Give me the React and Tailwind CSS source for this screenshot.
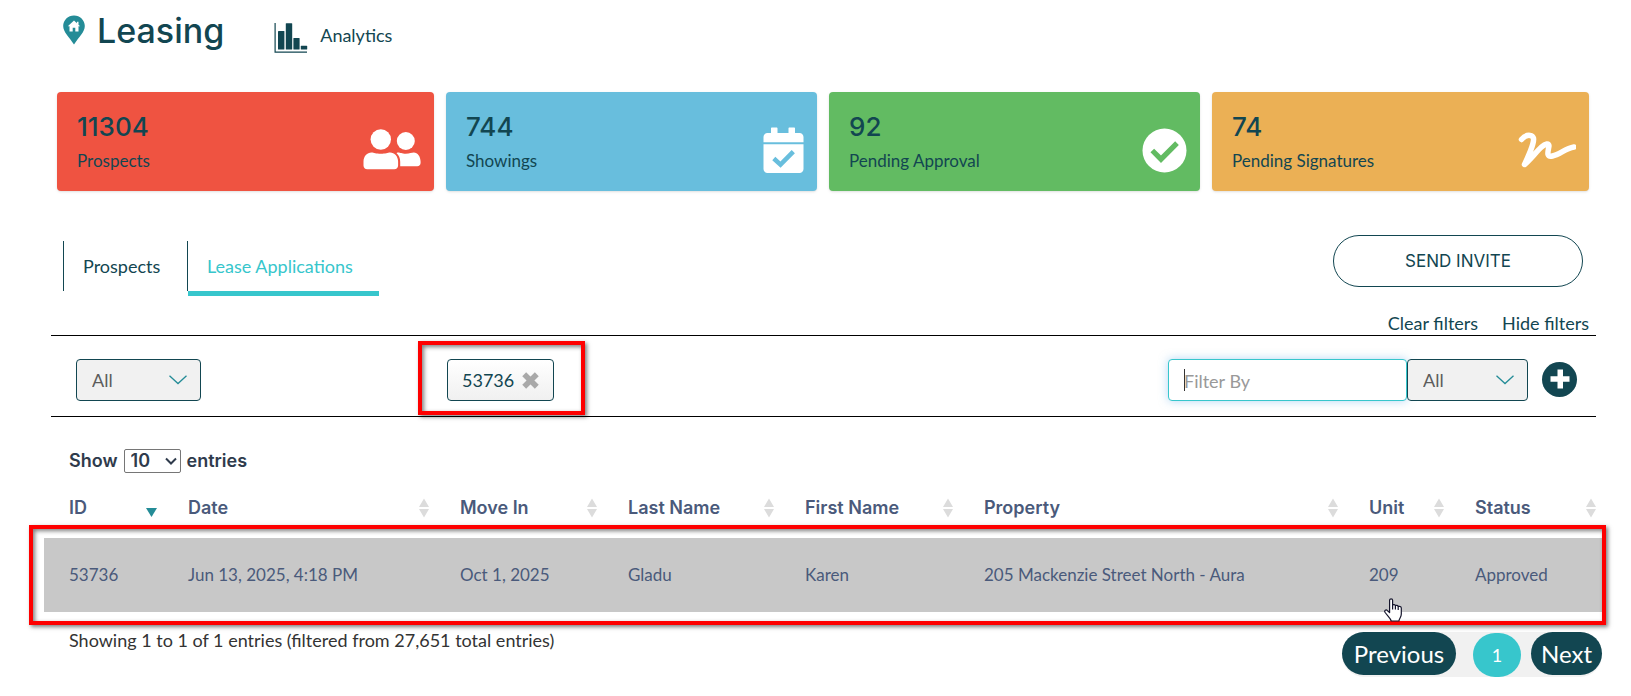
import { useState } from 'react';

const HEADING = "font-['Inter','Liberation_Sans',sans-serif]";

const stats = [
    { value: '11304', label: 'Prospects', color: 'bg-[#ef5341]', wrap: 'pr-1.5', Icon: PeopleIcon },
    { value: '744', label: 'Showings', color: 'bg-[#68bedd]', wrap: 'px-1.5', Icon: CalendarIcon },
    { value: '92', label: 'Pending Approval', color: 'bg-[#62bb62]', wrap: 'px-1.5', Icon: CheckIcon },
    { value: '74', label: 'Pending Signatures', color: 'bg-[#ebb055]', wrap: 'pl-1.5', Icon: SignatureIcon },
];

const columns = [
    { label: 'ID', width: 'w-[119px]', sorted: true },
    { label: 'Date', width: 'w-[272px]' },
    { label: 'Move In', width: 'w-[168px]' },
    { label: 'Last Name', width: 'w-[177px]' },
    { label: 'First Name', width: 'w-[179px]' },
    { label: 'Property', width: 'w-auto' },
    { label: 'Unit', width: 'w-[106px]' },
    { label: 'Status', width: 'w-[152px]' },
];

const rows = [
    ['53736', 'Jun 13, 2025, 4:18 PM', 'Oct 1, 2025', 'Gladu', 'Karen', '205 Mackenzie Street North - Aura', '209', 'Approved'],
];

function PinIcon() {
    return (
        <svg width="22" height="30" viewBox="0 0 22 30" aria-hidden="true">
            <path d="M11 0.500C5 0.500 0.200 5.200 0.200 11c0 6 5.600 10.500 10.800 18.500C16.200 21.500 21.800 17 21.800 11 21.800 5.200 17 0.500 11 0.500z" fill="#248c97" />
            <path d="M11 5.500L4.800 11.300h1.700v5.200h3.200v-3.800h2.600v3.800h3.200v-5.200h1.700l-1.700-1.600V6.800h-1.600v1.400z" fill="#fff" />
        </svg>
    );
}

function ChartIcon() {
    return (
        <svg width="34" height="32" viewBox="0 0 34 32" fill="#124651" aria-hidden="true">
            <path d="M0.500 1h1.200v28.500H33v1.200H0.500z" />
            <rect x="4" y="9" width="6.400" height="18.500" rx="0.600" />
            <rect x="11.800" y="1.200" width="6.400" height="26.300" rx="0.600" />
            <rect x="19.400" y="16" width="6.200" height="11.500" rx="0.600" />
            <rect x="26.800" y="23.800" width="6.400" height="3.700" rx="0.600" />
        </svg>
    );
}

function PeopleIcon() {
    return (
        <svg width="58" height="42" viewBox="0 0 58 42" fill="#fff" aria-hidden="true">
            <circle cx="17.800" cy="10.500" r="10.200" />
            <circle cx="42.800" cy="12" r="9" />
            <path d="M8.500 23.500c2.500 0 4.500 1.300 9.300 1.300s6.800-1.300 9.300-1.300c4.400 0 8 3.800 8 9v4c0 2.400-1.600 3.800-3.800 3.800H4.300c-2.200 0-3.800-1.400-3.800-3.800v-4c0-5.200 3.600-9 8-9z" />
            <path d="M35 23.500c2.500 0 3.700 1.200 7.800 1.200s5.600-1.200 8-1.200c3.800 0 6.800 4.200 6.800 9.300v1c0 2.300-1.400 3.500-3.400 3.500H37.200v-4.500c0-3.600-1.200-6.200-3.600-8.600 0-0.400 0.800-0.700 1.400-0.700z" />
        </svg>
    );
}

function CalendarIcon() {
    return (
        <svg width="41" height="46" viewBox="0 0 41 46" fill="#fff" aria-hidden="true">
            <path d="M9 0.500h4.500c0.700 0 1 0.300 1 1V6h11V1.500c0-0.700 0.300-1 1-1H31c0.700 0 1 0.300 1 1V6h4.500c2.300 0 4 1.700 4 4v5.200H0.500V10c0-2.300 1.700-4 4-4H8V1.500c0-0.700 0.300-1 1-1z" />
            <path d="M0.500 17.200h40V42c0 2.300-1.700 4-4 4h-32c-2.300 0-4-1.700-4-4z" />
            <path d="M10.800 31.500l6.700 6.200 12.800-13" fill="none" stroke="#68bedd" strokeWidth="4.500" />
        </svg>
    );
}

function CheckIcon() {
    return (
        <svg width="45" height="45" viewBox="0 0 45 45" aria-hidden="true">
            <circle cx="22.500" cy="22.500" r="22" fill="#fff" />
            <path d="M10.300 22.500l8.700 8.700 16-16" fill="none" stroke="#62bb62" strokeWidth="5.200" />
        </svg>
    );
}

function SignatureIcon() {
    return (
        <svg width="58" height="36" viewBox="0 0 58 36" fill="none" stroke="#fff" strokeWidth="5.500" strokeLinecap="round" strokeLinejoin="round" aria-hidden="true">
            <path d="M3.500 7.500C6 4.500 9 3 12 3.400c4 0.600 4.200 3.600 2.800 8.600C13.300 18 10 25 6.500 32.500 12 28 18 20 23.500 15c3.500-3.200 8-4.600 7.400-0.600-0.700 5-3.200 11 3.600 9.600C42 22.500 47 16.500 56 15" />
        </svg>
    );
}

function Chevron() {
    return (
        <svg className="pointer-events-none absolute right-3.5 top-4" width="18" height="10" viewBox="0 0 18 10" fill="none" stroke="#248c97" strokeWidth="1.300" aria-hidden="true">
            <path d="M0.500 0.700L9 8.500l8.500-7.800" />
        </svg>
    );
}

function SortIcon({ sorted }) {
    if (sorted) {
        return (
            <svg width="11" height="20" viewBox="0 0 11 20" aria-hidden="true">
                <path d="M0 10h11L5.500 19z" fill="#248c97" />
            </svg>
        );
    }
    return (
        <svg width="10" height="20" viewBox="0 0 10 20" fill="#dcdcdc" aria-hidden="true">
            <path d="M5 0.500L10 9H0zM0 11h10l-5 8.500z" />
        </svg>
    );
}

function FilterSelect({ label, className }) {
    return (
        <div className={`relative ${className}`}>
            <select aria-label={label} className="h-[42px] w-full appearance-none rounded border border-[#124651] bg-[#f1f1f1] pl-[15px] text-lg leading-6 text-[#5c5c5c]">
                <option>All</option>
            </select>
            <Chevron />
        </div>
    );
}

function HandCursor() {
    return (
        <svg className="absolute left-[40px] top-[60px] z-10" width="18" height="24" viewBox="0 0 18 24" fill="#fff" stroke="#14142b" strokeWidth="1.200" strokeLinejoin="round" aria-hidden="true">
            <path d="M5.600 14.500V2.200C5.600 0.300 8.600 0.300 8.600 2.200V7c0.800-0.700 2.500-0.500 2.800 0.600 0.900-0.600 2.500-0.200 2.800 0.900 1.300-0.500 3.100 0 3.100 1.700V16c0 3.500-2 4-2.400 7H7.200C6.500 19.800 3 17.500 1 14.200c-1-1.800 1-3 2.500-1.500z" />
            <path d="M8.600 7v4.500M11.400 7.600v4M14.200 8.500v3.500" fill="none" />
        </svg>
    );
}

export default function App() {
    const [tags, setTags] = useState(['53736']);

    return (
        <div className="min-h-screen overflow-hidden bg-white pb-4 font-['Lato','Liberation_Sans',sans-serif] text-lg leading-6 text-[#124651]">
            {/* Header */}
            <header className="flex items-start pl-[63px] pt-[11px]">
                <div className="pt-1"><PinIcon /></div>
                <h1 className={`${HEADING} ml-3 text-[34px] font-medium leading-10`}>Leasing</h1>
                <a href="#analytics" className="ml-[50px] mt-[11px] flex items-center gap-3">
                    <ChartIcon />
                    <span className="pb-1.5">Analytics</span>
                </a>
            </header>

            {/* Stats */}
            <section className="ml-[57px] mr-[42px] mt-[38px] grid grid-cols-4">
                {stats.map(({ value, label, color, wrap, Icon }) => (
                    <div key={label} className={wrap}>
                        <div className={`${color} flex h-[99px] items-start justify-between rounded pl-5 pr-[13px] pt-[19px] shadow-sm`}>
                            <div>
                                <p className={`${HEADING} text-[26px] font-medium leading-8`}>{value}</p>
                                <p className="mt-1.5 text-[17px] leading-6">{label}</p>
                            </div>
                            <div className="flex h-[78px] items-center">
                                <Icon />
                            </div>
                        </div>
                    </div>
                ))}
            </section>

            {/* Tabs */}
            <div className="ml-[63px] mr-12 mt-11 flex items-start justify-between">
                <nav className="flex pt-1.5">
                    <a href="#prospects" className="h-[50px] w-[124px] border-l border-[#124651] pl-[19px] pt-[13px]">Prospects</a>
                    <a href="#applications" className="border-l border-transparent text-[#37c6cc]">
                        <span className="-ml-px block h-[50px] border-l border-[#124651] pl-[19px] pr-[26px] pt-[13px]">Lease Applications</span>
                        <span className="block h-[5px] bg-[#37c6cc]" />
                    </a>
                </nav>
                <button className={`${HEADING} h-[52px] w-[250px] rounded-[26px] border border-[#124651] text-[17px]`}>SEND INVITE</button>
            </div>

            {/* Filters */}
            <div className="ml-[51px] mr-[35px] mt-[9px]">
                <div className="flex justify-end gap-6 pr-[7px] pt-1.5">
                    <a href="#clear">Clear filters</a>
                    <a href="#hide">Hide filters</a>
                </div>
                <div className="flex items-center border-y border-black pb-[15px] pt-[23px]">
                    <FilterSelect label="Type" className="ml-[25px] w-[125px]" />
                    <div className="relative ml-[246px] h-[42px]">
                        {tags.map(tag => (
                            <button key={tag} onClick={() => setTags(tags.filter(t => t !== tag))} className="flex h-[42px] w-[107px] items-center justify-between rounded border border-[#124651] bg-linear-to-b from-white to-[#f0f0f0] px-3.5">
                                {tag}
                                <svg width="17" height="17" viewBox="0 0 17 17" stroke="#a9a9a9" strokeWidth="5.500" aria-hidden="true">
                                    <path d="M2.200 2.200l12.600 12.600M14.800 2.200L2.200 14.800" />
                                </svg>
                            </button>
                        ))}
                        <div className="pointer-events-none absolute -bottom-3.5 -left-[29px] -right-[31px] -top-[18px] z-10 border-4 border-[#fe0000] shadow-[2px_2px_4px_rgba(0,0,0,0.5),inset_2px_2px_4px_rgba(0,0,0,0.5)]" />
                    </div>
                    <div className="ml-auto flex items-center pr-[19px]">
                        <div className="relative w-[239px]">
                            <input aria-label="Filter By" placeholder="Filter By" className="h-[42px] w-full rounded border border-[#37c6cc] bg-white pl-[15px] pt-0.5 shadow-[0_0_10px_rgba(102,175,233,0.5)] outline-none placeholder:text-[#999]" />
                            <span className="pointer-events-none absolute left-4 top-2.5 h-[22px] w-px bg-[#333]" />
                        </div>
                        <FilterSelect label="Status" className="w-[121px]" />
                        <button aria-label="Add filter" className="mb-0.5 ml-3.5 flex size-[35px] items-center justify-center rounded-full bg-[#124651]">
                            <svg width="20" height="20" viewBox="0 0 20 20" fill="#fff" aria-hidden="true">
                                <path d="M7.500 0.500h5.500v6.700h6.500v5.500h-6.500v6.800H7.500v-6.800H0.500V7.200h7z" />
                            </svg>
                        </button>
                    </div>
                </div>
            </div>

            {/* Table */}
            <div className="ml-11 mr-[29px]">
                <label className={`${HEADING} ml-[25px] mt-8 flex items-center text-lg leading-6 font-semibold text-[#2f3b4c]`}>
                    Show
                    <span className="relative mx-1.5">
                        <select className="block h-6 w-[57px] appearance-none rounded-xs border border-[#767676] bg-white pl-1.5 leading-5">
                            <option>10</option>
                        </select>
                        <svg className="pointer-events-none absolute right-1 top-2" width="12" height="9" viewBox="0 0 12 9" fill="none" stroke="#2f3b4c" strokeWidth="2" aria-hidden="true">
                            <path d="M1 1.500l5 5 5-5" />
                        </svg>
                    </span>
                    entries
                </label>

                <div className="relative">
                    <table className="mt-[23px] w-full table-fixed text-left text-[#4a5a7b]">
                        <thead>
                            <tr>
                                {columns.map(col => (
                                    <th key={col.label} className={`${col.width} ${HEADING} h-[42px] p-0 pb-[18px] pl-[25px] pr-1.5 align-top text-lg leading-6 font-semibold`}>
                                        <div className="flex h-6 items-center justify-between">
                                            {col.label}
                                            <SortIcon sorted={col.sorted} />
                                        </div>
                                    </th>
                                ))}
                            </tr>
                        </thead>
                        <tbody>
                            {rows.map(row => (
                                <tr key={row[0]} className="bg-[#c8c8c8]">
                                    {row.map((cell, i) => (
                                        <td key={i} className="relative h-[74px] whitespace-nowrap p-0 pl-[25px] text-[17px]">
                                            {cell}
                                            {i === 6 && <HandCursor />}
                                        </td>
                                    ))}
                                </tr>
                            ))}
                        </tbody>
                    </table>
                    <div className="pointer-events-none absolute -bottom-[13px] -left-[15px] -right-1 h-[100px] border-4 border-[#fe0000] shadow-[2px_2px_4px_rgba(0,0,0,0.5),inset_2px_2px_4px_rgba(0,0,0,0.5)]" />
                </div>

                <div className="mt-4 flex items-start justify-between pl-[25px]">
                    <p className="text-[#333]">Showing 1 to 1 of 1 entries (filtered from 27,651 total entries)</p>
                    <div className="mt-1 flex items-start rounded-[22px] bg-[#f1f1f1] text-2xl leading-8 text-white">
                        <button className="h-[43px] w-[114px] rounded-[22px] bg-[#124651]">Previous</button>
                        <button className="ml-[17px] mt-px h-11 w-12 rounded-[22px] bg-[#37c6cc] text-lg">1</button>
                        <button className="ml-2.5 h-[43px] w-[71px] rounded-[22px] bg-[#124651]">Next</button>
                    </div>
                </div>
            </div>
        </div>
    );
}
